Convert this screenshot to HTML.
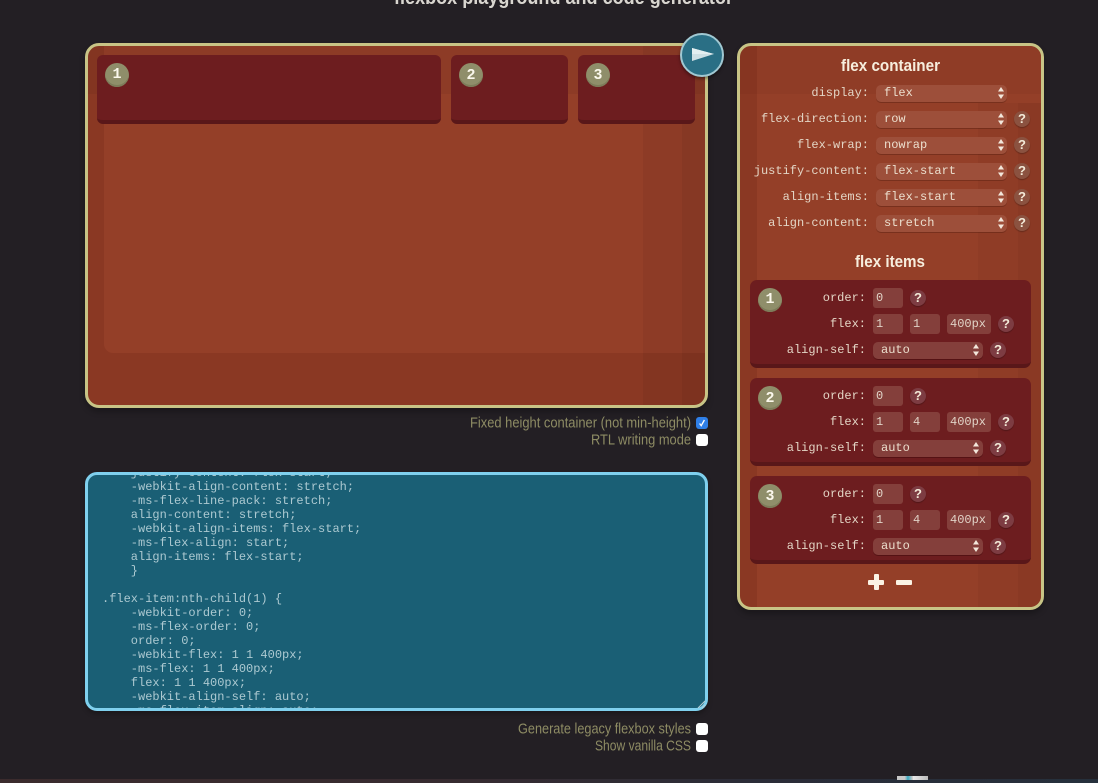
<!DOCTYPE html>
<html>
<head>
<meta charset="utf-8">
<style>
html,body{margin:0;padding:0;background:#231f24;}
body{position:relative;width:1098px;height:783px;overflow:hidden;font-family:"Liberation Mono",monospace;}
div,pre{box-sizing:border-box;}
.a{position:absolute;}
.stage{left:85px;top:43px;width:623px;height:365px;background:#8a3823;border:3px solid #c8c486;border-radius:14px;overflow:hidden;box-shadow:0 4px 6px rgba(0,0,0,.25);}
.panel{left:737px;top:43px;width:307px;height:567px;background:#8a3823;border:3px solid #c8c486;border-radius:14px;overflow:hidden;box-shadow:0 4px 6px rgba(0,0,0,.25);}
.lt{position:absolute;background:#943f28;}
.ov{position:absolute;background:rgba(50,10,10,.065);}
.panel .ov{background:rgba(50,10,10,.045);}
.item{position:absolute;top:55px;height:69px;background:#6d1d1f;border-bottom:4px solid #591719;border-radius:6px;}
.badge{position:absolute;width:24px;height:24px;border-radius:50%;background:#8f8e6a;box-shadow:inset 0 -2px 0 #7d7c5a;color:#fbf8ec;font:bold 15px/24px "Liberation Sans",sans-serif;text-align:center;}
.badge.m{font:bold 15px/24px "Liberation Mono",monospace;}
.lab{position:absolute;text-align:right;color:#e3d5c5;font-size:12px;line-height:14px;white-space:pre;margin-top:1px;}
.sel{position:absolute;height:17px;border-radius:5px;color:#ecdfce;font-size:12px;line-height:17px;white-space:pre;}
.sel.p{left:876px;width:131px;background:#9d4f3a;box-shadow:0 1px 0 rgba(70,20,10,.35);padding-left:8px;}
.sel.i{left:873px;width:110px;background:#843f3b;box-shadow:0 1px 0 rgba(40,0,0,.35);padding-left:8px;}
.inp{position:absolute;height:20px;background:#843f3b;border-radius:3px;color:#e0d2c6;font-size:12px;line-height:20px;padding-left:3px;white-space:pre;}
.h{position:absolute;width:16px;height:16px;border-radius:50%;color:#f3ead8;font:bold 13px/16px "Liberation Sans",sans-serif;text-align:center;box-shadow:0 1px 1px rgba(0,0,0,.25);}
.h.p{background:#8b5240;}
.h.i{background:#7d3c42;}
.fi{position:absolute;left:750px;width:281px;height:88px;background:#6d1d1f;border-bottom:4px solid #591719;border-radius:7px;}
.cb{position:absolute;left:696px;width:12px;height:12px;border-radius:3px;background:#fff;}
.code{left:85px;top:472px;width:623px;height:239px;background:#1a5f75;border:3px solid #7fd0ee;border-radius:12px;overflow:hidden;box-shadow:0 3px 5px rgba(0,0,0,.25);}
.code pre{position:absolute;left:14px;top:-9px;margin:0;font:12px/14px "Liberation Mono",monospace;color:#acc9d1;}
svg.t{position:absolute;left:0;top:0;}
</style>
</head>
<body>
<div class="a stage">
  <div class="lt" style="left:16px;top:0;width:610px;height:307px;border-bottom-left-radius:9px"></div>
  <div class="ov" style="left:0;top:0;width:100%;height:48px"></div>
  <div class="ov" style="left:555px;top:0;width:70px;height:100%"></div>
  <div class="ov" style="left:594px;top:0;width:30px;height:100%"></div>
</div>
<div class="item" style="left:97px;width:344px"></div>
<div class="item" style="left:451px;width:117px"></div>
<div class="item" style="left:578px;width:117px"></div>
<div class="badge m" style="left:105px;top:63px">1</div>
<div class="badge" style="left:459px;top:63px">2</div>
<div class="badge" style="left:586px;top:63px">3</div>
<div class="a" style="left:680px;top:33px;width:44px;height:44px;border-radius:50%;background:#2a6f85;border:2px solid #a0c8d2;box-shadow:0 2px 3px rgba(0,0,0,.4)"></div>
<svg class="a" style="left:680px;top:33px" width="44" height="44"><polygon points="12,15 12,28 34,21" fill="#cfdfe4"/><polygon points="12,15 34,21 12,21" fill="#e4eef0"/></svg>

<div class="a panel">
  <div class="lt" style="left:17px;top:0;width:290px;height:100%"></div>
  <div class="ov" style="left:0;top:0;width:100%;height:48px"></div>
  <div class="ov" style="left:238px;top:57px;width:70px;height:100%"></div>
  <div class="ov" style="left:278px;top:57px;width:30px;height:100%"></div>
</div>

<div class="lab" style="left:700px;width:169px;top:85px">display:</div>
<div class="sel p" style="top:85px">flex</div>
<div class="lab" style="left:700px;width:169px;top:111px">flex-direction:</div>
<div class="sel p" style="top:111px">row</div>
<div class="h p" style="left:1014px;top:111px">?</div>
<div class="lab" style="left:700px;width:169px;top:137px">flex-wrap:</div>
<div class="sel p" style="top:137px">nowrap</div>
<div class="h p" style="left:1014px;top:137px">?</div>
<div class="lab" style="left:700px;width:169px;top:163px">justify-content:</div>
<div class="sel p" style="top:163px">flex-start</div>
<div class="h p" style="left:1014px;top:163px">?</div>
<div class="lab" style="left:700px;width:169px;top:189px">align-items:</div>
<div class="sel p" style="top:189px">flex-start</div>
<div class="h p" style="left:1014px;top:189px">?</div>
<div class="lab" style="left:700px;width:169px;top:215px">align-content:</div>
<div class="sel p" style="top:215px">stretch</div>
<div class="h p" style="left:1014px;top:215px">?</div>

<div class="fi" style="top:280px"></div>
<div class="badge m" style="left:758px;top:288px">1</div>
<div class="lab" style="left:760px;width:106px;top:290px">order:</div>
<div class="inp" style="left:873px;top:288px;width:30px">0</div>
<div class="h i" style="left:910px;top:290px">?</div>
<div class="lab" style="left:760px;width:106px;top:316px">flex:</div>
<div class="inp" style="left:873px;top:314px;width:30px">1</div>
<div class="inp" style="left:910px;top:314px;width:30px">1</div>
<div class="inp" style="left:947px;top:314px;width:44px">400px</div>
<div class="h i" style="left:998px;top:316px">?</div>
<div class="lab" style="left:760px;width:106px;top:342px">align-self:</div>
<div class="sel i" style="top:342px">auto</div>
<div class="h i" style="left:990px;top:342px">?</div>

<div class="fi" style="top:378px"></div>
<div class="badge" style="left:758px;top:386px">2</div>
<div class="lab" style="left:760px;width:106px;top:388px">order:</div>
<div class="inp" style="left:873px;top:386px;width:30px">0</div>
<div class="h i" style="left:910px;top:388px">?</div>
<div class="lab" style="left:760px;width:106px;top:414px">flex:</div>
<div class="inp" style="left:873px;top:412px;width:30px">1</div>
<div class="inp" style="left:910px;top:412px;width:30px">4</div>
<div class="inp" style="left:947px;top:412px;width:44px">400px</div>
<div class="h i" style="left:998px;top:414px">?</div>
<div class="lab" style="left:760px;width:106px;top:440px">align-self:</div>
<div class="sel i" style="top:440px">auto</div>
<div class="h i" style="left:990px;top:440px">?</div>

<div class="fi" style="top:476px"></div>
<div class="badge" style="left:758px;top:484px">3</div>
<div class="lab" style="left:760px;width:106px;top:486px">order:</div>
<div class="inp" style="left:873px;top:484px;width:30px">0</div>
<div class="h i" style="left:910px;top:486px">?</div>
<div class="lab" style="left:760px;width:106px;top:512px">flex:</div>
<div class="inp" style="left:873px;top:510px;width:30px">1</div>
<div class="inp" style="left:910px;top:510px;width:30px">4</div>
<div class="inp" style="left:947px;top:510px;width:44px">400px</div>
<div class="h i" style="left:998px;top:512px">?</div>
<div class="lab" style="left:760px;width:106px;top:538px">align-self:</div>
<div class="sel i" style="top:538px">auto</div>
<div class="h i" style="left:990px;top:538px">?</div>

<div class="a" style="left:868px;top:579.5px;width:16px;height:5px;background:#fbf3e4;border-radius:1px"></div>
<div class="a" style="left:873.5px;top:574px;width:5px;height:16px;background:#fbf3e4;border-radius:1px"></div>
<div class="a" style="left:896px;top:579.5px;width:16px;height:5px;background:#fbf3e4;border-radius:1px"></div>

<div class="a code"><pre>    justify-content: flex-start;
    -webkit-align-content: stretch;
    -ms-flex-line-pack: stretch;
    align-content: stretch;
    -webkit-align-items: flex-start;
    -ms-flex-align: start;
    align-items: flex-start;
    }

.flex-item:nth-child(1) {
    -webkit-order: 0;
    -ms-flex-order: 0;
    order: 0;
    -webkit-flex: 1 1 400px;
    -ms-flex: 1 1 400px;
    flex: 1 1 400px;
    -webkit-align-self: auto;
    -ms-flex-item-align: auto;
    align-self: auto;
    }</pre></div>
<svg class="a" style="left:697px;top:700px" width="9" height="9"><path d="M1 8L8 1M5 8L8 5" stroke="#b5cfd6" stroke-width="1" fill="none"/></svg>

<div class="cb" style="top:417px;background:#2f7fe8"></div>
<svg class="a" style="left:696px;top:417px" width="12" height="12"><path d="M3.6 6.5L5.2 8.7L8.4 3" stroke="#fff" stroke-width="1.3" fill="none"/></svg>
<div class="cb" style="top:434px"></div>
<div class="cb" style="top:723px"></div>
<div class="cb" style="top:740px"></div>

<div class="a" style="left:0;top:779px;width:1098px;height:4px;background:linear-gradient(90deg,#3b2b2d,#372b30 40%,#2a2c38 70%,#26303c)"></div>
<div class="a" style="left:897px;top:776px;width:31px;height:4px;background:linear-gradient(90deg,#c8c8c8 0,#c8c8c8 25%,#39a9c0 35%,#c8c8c8 50%,#e8e8e8 52%,#bbb 100%)"></div>

<svg class="t" width="1098" height="783" xmlns="http://www.w3.org/2000/svg" font-family="Liberation Sans, sans-serif">
  <defs>
    <g id="ar"><polygon points="0,4.5 3,0 6,4.5" fill="#f3e8dc"/><polygon points="0,7.5 3,12 6,7.5" fill="#f3e8dc"/></g>
  </defs>
  <use href="#ar" x="998" y="87"/><use href="#ar" x="998" y="113"/><use href="#ar" x="998" y="139"/><use href="#ar" x="998" y="165"/><use href="#ar" x="998" y="191"/><use href="#ar" x="998" y="217"/>
  <use href="#ar" x="973" y="344"/><use href="#ar" x="973" y="442"/><use href="#ar" x="973" y="540"/>
  <text x="394" y="4" font-size="20" font-weight="bold" fill="#d9d6d0" textLength="339" lengthAdjust="spacingAndGlyphs">flexbox playground and code generator</text>
  <text x="841" y="71" font-size="17" font-weight="bold" fill="#f7eedd" textLength="99" lengthAdjust="spacingAndGlyphs">flex container</text>
  <text x="855" y="267" font-size="17" font-weight="bold" fill="#f7eedd" textLength="70" lengthAdjust="spacingAndGlyphs">flex items</text>
  <g font-size="15" fill="#8e8c64">
    <text x="470" y="427.5" textLength="221" lengthAdjust="spacingAndGlyphs">Fixed height container (not min-height)</text>
    <text x="591" y="444.5" textLength="100" lengthAdjust="spacingAndGlyphs">RTL writing mode</text>
    <text x="518" y="733.5" textLength="173" lengthAdjust="spacingAndGlyphs">Generate legacy flexbox styles</text>
    <text x="595" y="750.5" textLength="96" lengthAdjust="spacingAndGlyphs">Show vanilla CSS</text>
  </g>
</svg>
</body>
</html>
